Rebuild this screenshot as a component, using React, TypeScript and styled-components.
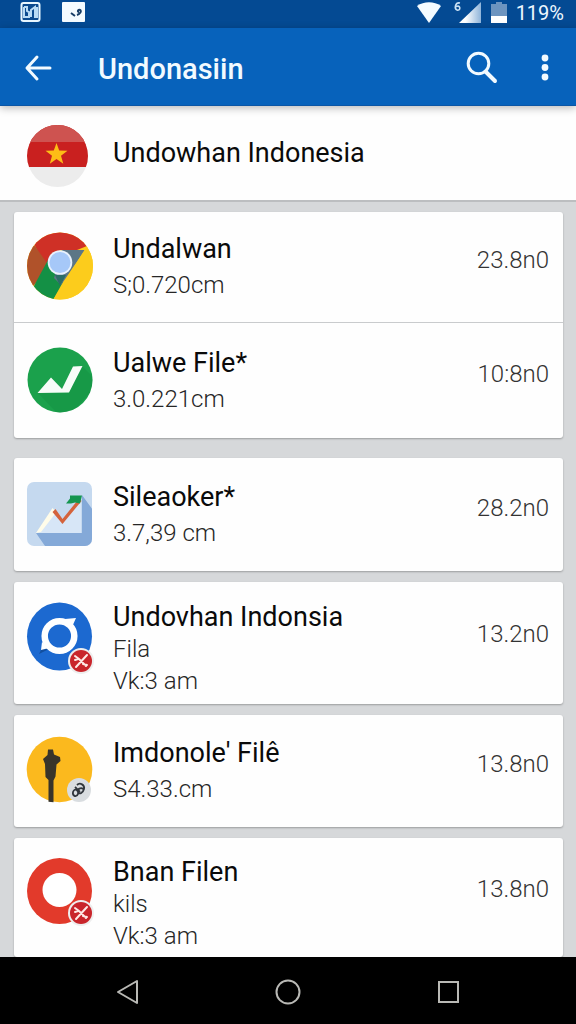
import React from "react";
import styled, { createGlobalStyle } from "styled-components";

const GlobalStyle = createGlobalStyle`
  *, *::before, *::after { box-sizing: border-box; }
  body {
    margin: 0;
    background: #d6d8da;
    font-family: Roboto, "Liberation Sans", sans-serif;
    color: #0a0a0a;
  }
`;

const Page = styled.div`
  min-height: 100vh;
  display: flex;
  flex-direction: column;
`;

const StatusBar = styled.div`
  height: 28px;
  padding: 0 12px 4px 20px;
  display: flex;
  align-items: center;
  justify-content: space-between;
  background: #044a93;
  color: #eef8ff;
`;

const StatusGroup = styled.div<{ $gap: number }>`
  display: flex;
  align-items: center;
  gap: ${(p) => p.$gap}px;
`;

const StatusText = styled.span`
  padding-top: 2px;
  font-size: 20px;
  line-height: 24px;
`;

const AppBar = styled.header`
  position: relative;
  height: 78px;
  padding: 0 16px 0 22px;
  display: flex;
  align-items: center;
  background: #0762bb;
  border-bottom: 1px solid #0b56a6;
  box-shadow: 0 2px 8px rgba(0, 0, 0, 0.28);
`;

const IconButton = styled.button`
  display: flex;
  align-items: center;
  justify-content: center;
  padding: 0;
  border: 0;
  background: none;
  color: #f2faff;
  cursor: pointer;
`;

const AppTitle = styled.h1`
  flex: 1;
  margin: 0 0 0 44px;
  padding-top: 5px;
  font-size: 29px;
  line-height: 36px;
  font-weight: 500;
  color: #f2faff;
`;

const Actions = styled.div`
  display: flex;
  gap: 32px;
`;

const Profile = styled.section`
  height: 96px;
  padding: 0 27px;
  display: flex;
  align-items: center;
  gap: 25px;
  background: #fefefe;
  border-bottom: 2px solid #bcbec0;
`;

const Avatar = styled.div`
  display: flex;
  padding-top: 5px;
`;

const List = styled.main`
  flex: 1;
  padding: 10px 13px 0 14px;
  display: flex;
  flex-direction: column;
  gap: 11px;
`;

const Card = styled.ul<{ $spaced?: boolean }>`
  margin: 0 0 ${(p) => (p.$spaced ? 9 : 0)}px;
  padding: 0;
  list-style: none;
  border-radius: 3px;
  background: #fefefe;
  box-shadow: 0 1px 2px rgba(0, 0, 0, 0.28);
`;

const Row = styled.li<{ $height: number }>`
  min-height: ${(p) => p.$height}px;
  padding: 0 14px 0 13px;
  display: flex;
  align-items: center;
  gap: 22px;
  & + & {
    border-top: 1px solid #c9cbcd;
  }
`;

const Badge = styled.div<{ $tall: boolean }>`
  flex: none;
  width: 64px;
  display: flex;
  padding-bottom: ${(p) => (p.$tall ? 12 : 2)}px;

  svg {
    flex: none;
    overflow: visible;
  }
`;

const Texts = styled.div<{ $tall: boolean }>`
  flex: 1;
  min-width: 0;
  padding-top: ${(p) => (p.$tall ? 12 : 0)}px;
`;

const Title = styled.h2`
  margin: 0;
  font-size: 27px;
  line-height: 32px;
  font-weight: 400;
  color: #0a0a0a;
`;

const Detail = styled.p<{ $tall: boolean }>`
  margin: 0;
  padding-top: ${(p) => (p.$tall ? 0 : 4)}px;
  font-size: 24px;
  line-height: 32px;
  font-weight: 300;
  color: #262626;
`;

const Value = styled.span<{ $tall: boolean }>`
  padding-bottom: ${(p) => (p.$tall ? 18 : 14)}px;
  font-size: 24px;
  line-height: 32px;
  font-weight: 300;
  color: #333;
`;

const NavBar = styled.nav`
  height: 67px;
  padding-top: 3px;
  display: flex;
  align-items: center;
  justify-content: center;
  gap: 128px;
  background: #000;
`;

const FlagIcon = () => (
  <svg width="61" height="62" viewBox="0 0 61 62" aria-hidden="true">
    <clipPath id="flag"><ellipse cx="30.5" cy="31" rx="30.5" ry="31" /></clipPath>
    <g clipPath="url(#flag)">
      <rect width="61" height="62" fill="#ececec" />
      <rect width="61" height="42" fill="#c9201f" />
      <rect width="61" height="17" fill="#ce5350" />
    </g>
    <path d="M29.5 18l2.7 7.500 8.300.2-6.500 5 2.300 8-6.800-4.600-6.700 4.600 2.200-8-6.500-5 8.300-.2z" fill="#fdbd16" />
  </svg>
);

const ChromeIcon = () => (
  <svg width="66" height="68" viewBox="0 0 66 68" aria-hidden="true">
    <clipPath id="chrome"><ellipse cx="33" cy="34" rx="33" ry="33.5" /></clipPath>
    <g clipPath="url(#chrome)">
      <rect width="66" height="68" fill="#fccc1c" />
      <path d="M0 0h66L60 14 50 18H33L20 38 8 14z" fill="#cf3026" />
      <path d="M8 14L22 34 8 52 0 60V8z" fill="#b0522a" />
      <path d="M9 50L21 28 36 50 26 68H0z" fill="#149045" />
      <path d="M35 18h23L34 53 27 46z" fill="#5c7686" />
      <path d="M60 14L26 68h40V10z" fill="#fccc1c" />
      <path d="M28 43h11l-6 11z" fill="#2b6d68" />
    </g>
    <circle cx="33" cy="30.500" r="12.300" fill="#e9f2fd" />
    <circle cx="33" cy="30.500" r="10.500" fill="#a6c8f8" />
  </svg>
);

const CheckIcon = () => (
  <svg width="66" height="66" viewBox="0 0 66 66" aria-hidden="true">
    <clipPath id="check"><circle cx="33" cy="33" r="32.500" /></clipPath>
    <circle cx="33" cy="33" r="32.500" fill="#1ba14c" />
    <path clipPath="url(#check)" d="M11 46L30 66H45L66 42V30L55 19 41 46z" fill="#128a40" opacity=".35" />
    <path d="M10.500 46L24 30.500l11 11.500L46 19.500l9.500-.5L42 45.500z" fill="#f7fcf8" />
  </svg>
);

const ChartIcon = () => (
  <svg width="66" height="64" viewBox="0 0 66 64" aria-hidden="true">
    <clipPath id="chart"><rect x="0" y="0" width="65" height="64" rx="7" /></clipPath>
    <g clipPath="url(#chart)">
      <rect width="66" height="64" fill="#c5d9ef" />
      <path d="M9 51l9 13h48V28L55 13v38z" fill="#84a9d8" />
      <path d="M9 51L27 28l8 14 19-26v35z" fill="#d7e6f7" />
    </g>
    <path d="M9 51L25.500 26l4 4L14 50z" fill="#fffce9" />
    <path d="M25.500 30l3-3 7 10 17-21 2 3-19 23z" fill="#d4633c" />
    <path d="M43 13.500h12l-2 8-5-1-4 1h-5l4-5z" fill="#159650" />
  </svg>
);

const CrossMark = ({ y }: { y: number }) => (
  <g transform={`translate(54 ${y})`}>
    <circle r="13" fill="#eee" />
    <circle r="11" fill="#c9252b" />
    <path d="M-6-5l4 3 7 7M6-6L-5 6M-6-1l3-1M2 3l4 1" stroke="#ffe9e6" strokeWidth="2" fill="none" strokeLinecap="round" />
  </g>
);

const RingIcon = () => (
  <svg width="68" height="70" viewBox="0 0 68 70" aria-hidden="true">
    <ellipse cx="32.500" cy="34.500" rx="32.500" ry="34" fill="#1c69d0" />
    <path d="M12 52l4-8 6 3z" fill="#124f9f" />
    <path d="M15 40l-1 8 8-2zM38 17l11-1-4 9z" fill="#fff" />
    <circle cx="32.500" cy="34" r="14.800" fill="#1c69d0" stroke="#fff" strokeWidth="6.500" />
    <CrossMark y={59} />
  </svg>
);

const TowerIcon = () => (
  <svg width="66" height="68" viewBox="0 0 66 68" aria-hidden="true">
    <circle cx="32.500" cy="33.500" r="32.800" fill="#fbb91e" />
    <path d="M21 13.500h5l1 5 6 2.500.5 4-4 3.500-1 12-2 4v21.800l-5-.5V44l-3-3-.5-13-2-5 4.500-4z" fill="#38342a" />
    <circle cx="52" cy="54" r="12" fill="#d9dde0" />
    <path d="M46 56c2-5 6-1 5 2s-6 3-5-2zM50 49c3-3 8 0 7 4s-5 6-6 3 3-5 5-3M48 51l5 5" stroke="#30363c" strokeWidth="1.800" fill="none" />
  </svg>
);

const DonutIcon = () => (
  <svg width="68" height="70" viewBox="0 0 68 70" aria-hidden="true">
    <ellipse cx="32.500" cy="34" rx="32.500" ry="33" fill="#e23a2b" />
    <circle cx="32.500" cy="33" r="17" fill="#fff" />
    <CrossMark y={56} />
  </svg>
);

interface Entry {
  title: string;
  details: string[];
  value: string;
  height: number;
  Icon: () => React.JSX.Element;
}

const groups: Entry[][] = [
  [
    { title: "Undalwan", details: ["S;0.720cm"], value: "23.8n0", height: 110, Icon: ChromeIcon },
    { title: "Ualwe File*", details: ["3.0.221cm"], value: "10:8n0", height: 116, Icon: CheckIcon },
  ],
  [{ title: "Sileaoker*", details: ["3.7,39 cm"], value: "28.2n0", height: 113, Icon: ChartIcon }],
  [{ title: "Undovhan Indonsia", details: ["Fila", "Vk:3 am"], value: "13.2n0", height: 122, Icon: RingIcon }],
  [{ title: "Imdonole' Filê", details: ["S4.33.cm"], value: "13.8n0", height: 112, Icon: TowerIcon }],
  [{ title: "Bnan Filen", details: ["kils", "Vk:3 am"], value: "13.8n0", height: 119, Icon: DonutIcon }],
];

const EntryRow = ({ title, details, value, height, Icon }: Entry) => {
  const tall = details.length > 1;
  return (
    <Row $height={height}>
      <Badge $tall={tall}>
        <Icon />
      </Badge>
      <Texts $tall={tall}>
        <Title>{title}</Title>
        {details.map((d) => (
          <Detail key={d} $tall={tall}>{d}</Detail>
        ))}
      </Texts>
      <Value $tall={tall}>{value}</Value>
    </Row>
  );
};

export default function App() {
  return (
    <Page>
      <GlobalStyle />
      <StatusBar>
        <StatusGroup $gap={21}>
          <svg width="21" height="20" viewBox="0 0 21 20" aria-hidden="true">
            <rect x="1.500" y="1" width="18" height="18" rx="2" fill="#0b4b8f" stroke="#e8f7ff" strokeWidth="2" />
            <path d="M4 5v11M4 5h3v4l2 1v5H5M11 15V8l4-3v11M17 5v11" stroke="#b9dcf5" strokeWidth="2" fill="none" />
          </svg>
          <svg width="23" height="20" viewBox="0 0 23 20" aria-hidden="true">
            <rect width="23" height="20" rx="1" fill="#f4fbff" />
            <path d="M9 11l4 3M15 13c3-1 5-4 3-5s-3 2-1 2" stroke="#173d66" strokeWidth="2" fill="none" />
          </svg>
        </StatusGroup>
        <StatusGroup $gap={9}>
          <svg width="26" height="21" viewBox="0 0 26 21" aria-hidden="true">
            <path d="M1 4C8-1 18-1 25 4L13 21z" fill="#f4fbff" />
          </svg>
          <svg width="31" height="22" viewBox="0 0 31 22" aria-hidden="true">
            <defs>
              <linearGradient id="signal">
                <stop offset="0.300" stopColor="#fff" />
                <stop offset="1" stopColor="#8fb4da" />
              </linearGradient>
            </defs>
            <path d="M8 22L30 1v21z" fill="url(#signal)" />
            <path d="M9 2c-5-1-6 6-3 7s4-3 1-4L4 6" stroke="#c9e0f3" strokeWidth="1.500" fill="none" />
          </svg>
          <svg width="16" height="21" viewBox="0 0 16 21" aria-hidden="true">
            <path d="M5 0h6v2h5v19H0V2h5z" fill="#6d94bf" />
            <path d="M0 14h16v7H0z" fill="#fff" />
          </svg>
          <StatusText>119%</StatusText>
        </StatusGroup>
      </StatusBar>
      <AppBar>
        <IconButton aria-label="Back">
          <svg width="32" height="32" viewBox="0 0 32 32" fill="none" stroke="currentColor" strokeWidth="3" strokeLinecap="round" strokeLinejoin="round">
            <path d="M15 6L5 17l10 11M5.500 17H28" />
          </svg>
        </IconButton>
        <AppTitle>Undonasiin</AppTitle>
        <Actions>
          <IconButton aria-label="Search">
            <svg width="32" height="34" viewBox="0 0 32 34" fill="none" stroke="currentColor" strokeWidth="3">
              <circle cx="12.500" cy="13.500" r="10.300" />
              <path d="M19.500 21.500L29 31" strokeWidth="4" strokeLinecap="round" />
            </svg>
          </IconButton>
          <IconButton aria-label="More options">
            <svg width="30" height="32" viewBox="0 0 30 32" fill="currentColor">
              <circle cx="15" cy="7" r="3.400" />
              <circle cx="15" cy="16.500" r="3.400" />
              <circle cx="15" cy="26" r="3.400" />
            </svg>
          </IconButton>
        </Actions>
      </AppBar>
      <Profile>
        <Avatar>
          <FlagIcon />
        </Avatar>
        <Title>Undowhan Indonesia</Title>
      </Profile>
      <List>
        {groups.map((rows, i) => (
          <Card key={i} $spaced={rows.length > 1}>
            {rows.map((r) => (
              <EntryRow key={r.title} {...r} />
            ))}
          </Card>
        ))}
      </List>
      <NavBar>
        <IconButton aria-label="Back">
          <svg width="32" height="32" viewBox="0 0 32 32" fill="none" stroke="#b9b9b5" strokeWidth="2" strokeLinejoin="round">
            <path d="M25 5v22L6 16z" />
          </svg>
        </IconButton>
        <IconButton aria-label="Home">
          <svg width="32" height="32" viewBox="0 0 32 32" fill="none" stroke="#b9b9b5" strokeWidth="2">
            <circle cx="16" cy="16" r="11.500" />
          </svg>
        </IconButton>
        <IconButton aria-label="Recent apps">
          <svg width="32" height="32" viewBox="0 0 32 32" fill="none" stroke="#b9b9b5" strokeWidth="2">
            <rect x="7" y="6" width="19" height="20" />
          </svg>
        </IconButton>
      </NavBar>
    </Page>
  );
}
